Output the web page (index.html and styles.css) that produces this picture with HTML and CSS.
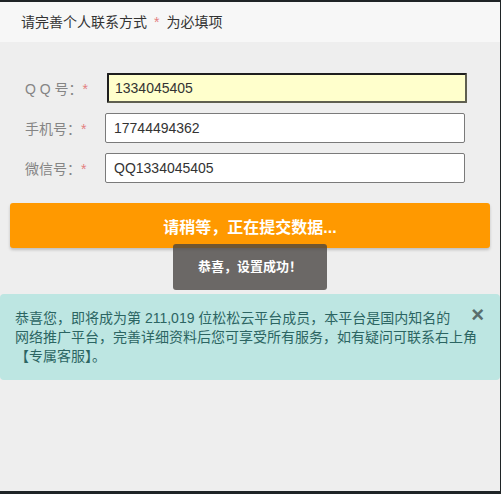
FILE: index.html
```html
<!DOCTYPE html>
<html lang="zh-CN">
<head>
<meta charset="utf-8">
<title>完善联系方式</title>
<link rel="stylesheet" href="styles.css">
</head>
<body>
<div class="frame">
  <div class="header">请完善个人联系方式<span class="req head-req">*</span>为必填项</div>
  <div class="content">
    <form class="form">
      <div class="row">
        <label class="label">Q Q 号：<span class="req">*</span></label>
        <div class="field focused">1334045405</div>
      </div>
      <div class="row">
        <label class="label">手机号：<span class="req">*</span></label>
        <div class="field">17744494362</div>
      </div>
      <div class="row">
        <label class="label">微信号：<span class="req">*</span></label>
        <div class="field">QQ1334045405</div>
      </div>
      <div class="btn-wrap">
        <button type="button" class="submit">请稍等，正在提交数据...</button>
        <div class="toast">恭喜，设置成功！</div>
      </div>
    </form>
    <div class="alert">
      <span class="close">×</span>
      <span class="line">恭喜您，即将成为第 211,019 位松松云平台成员，本平台是国内知名的</span>
      <span class="line">网络推广平台，完善详细资料后您可享受所有服务，如有疑问可联系右上角</span>
      <span class="line">【专属客服】。</span>
    </div>
  </div>
</div>
</body>
</html>
```
FILE: styles.css
```css
html, body {
  margin: 0;
  padding: 0;
  background: #1f2426;
}
body {
  font-family: "Liberation Sans", "Noto Sans CJK SC", sans-serif;
  font-size: 14px;
}
.frame {
  margin-top: 2px;
  width: 500px;
  height: 489px;
  background: #eeeeee;
  display: flex;
  flex-direction: column;
}
.header {
  height: 40px;
  line-height: 40px;
  padding-left: 21px;
  background: #f7f7f7;
  color: #333;
  font-size: 14px;
}
.req {
  color: #e38080;
}
.head-req {
  margin: 0 7px;
}
.content {
  display: flex;
  flex-direction: column;
}
.form {
  margin: 31px 0 0 0;
  display: flex;
  flex-direction: column;
  gap: 10px;
}
.row {
  display: flex;
  align-items: center;
  height: 30px;
}
.label {
  width: 80px;
  padding-left: 25px;
  color: #858585;
  font-size: 14px;
  white-space: nowrap;
}
.field {
  box-sizing: border-box;
  width: 360px;
  height: 30px;
  line-height: 28px;
  border: 1px solid #7a7a7a;
  border-radius: 2px;
  background: #fff;
  color: #333;
  padding-left: 8px;
  font-size: 14px;
}
.field.focused {
  margin-left: 2px;
  line-height: 26px;
  border: 2px solid #5f5f50;
  border-top-color: #1e1e1e;
  border-left-color: #1e1e1e;
  background: #ffffcc;
  padding-left: 6px;
  border-radius: 1px;
}
.btn-wrap {
  position: relative;
  margin: 10px 10px 0 10px;
  height: 45px;
}
.submit {
  display: block;
  width: 480px;
  height: 45px;
  border: none;
  border-radius: 3px;
  background: #ff9900;
  color: #fff;
  font-family: "Liberation Sans", "Noto Sans CJK SC", sans-serif;
  font-size: 16px;
  font-weight: bold;
  box-shadow: 0 2px 3px rgba(0, 0, 0, 0.2);
  padding: 0;
}
.toast {
  position: absolute;
  left: 163px;
  top: 41px;
  width: 154px;
  height: 46px;
  line-height: 46px;
  text-align: center;
  background: rgba(70, 66, 64, 0.78);
  color: #fff;
  font-size: 13px;
  font-weight: bold;
  border-radius: 3px;
}
.alert {
  margin-top: 46px;
  box-sizing: border-box;
  height: 86px;
  padding: 15px 15px 0 15px;
  background: #bde6e2;
  color: #2c6562;
  border-radius: 4px;
  font-size: 14px;
  line-height: 19px;
  position: relative;
}
.line {
  display: block;
  white-space: nowrap;
}
.close {
  position: absolute;
  right: 16px;
  top: 11px;
  font-size: 22px;
  font-weight: bold;
  color: #5a6e6d;
  line-height: 20px;
  font-family: "Liberation Sans", sans-serif;
}
```
